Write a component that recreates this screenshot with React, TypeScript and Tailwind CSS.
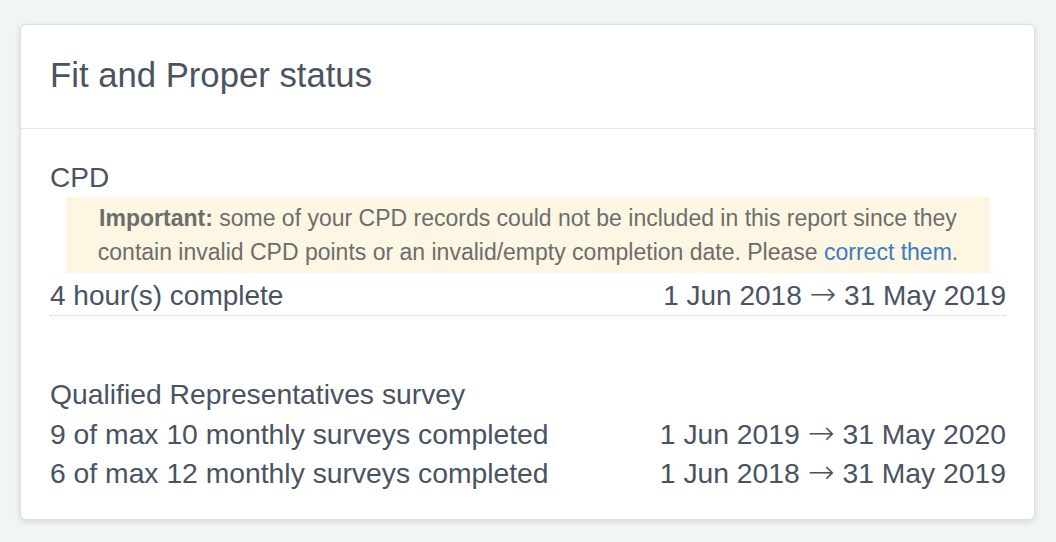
const rows = {
  cpd: [{ label: '4 hour(s) complete', from: '1 Jun 2018', to: '31 May 2019' }],
  survey: [
    { label: '9 of max 10 monthly surveys completed', from: '1 Jun 2019', to: '31 May 2020' },
    { label: '6 of max 12 monthly surveys completed', from: '1 Jun 2018', to: '31 May 2019' },
  ],
}

const Period = ({ from, to }: { from: string; to: string }) => (
  <span>
    {from} <span className="font-['DejaVu_Sans',sans-serif] text-[32px] font-extralight leading-none">→</span> {to}
  </span>
)

const App = () => {
  return (
    <div className="min-h-[542px] bg-[#f2f5f6] pt-[24px] pl-[20px] pr-[21px] font-['Liberation_Sans',Arial,sans-serif] text-[#4a5362]">
      <div className="rounded-[6px] border border-[#dcdfe2] bg-white shadow-[0_2px_6px_rgba(0,0,0,0.12)]">
        <div className="flex h-[104px] items-center border-b border-[#e3e5e8] px-[29px] pb-[2px]">
          <h1 className="text-[34.7px] leading-none">Fit and Proper status</h1>
        </div>

        <div className="pl-[29px] pr-[28px] pt-[30px] pb-[26px]">
          <h2 className="text-[28px] leading-[38px]">CPD</h2>
          <div className="mx-[16px] bg-[#fcf6e2] px-[20px] py-[4px] text-center text-[23px] leading-[34px] text-[#6d6d6d]">
            <strong className="font-bold">Important:</strong> some of your CPD records could not be included in this
            report since they contain invalid CPD points or an invalid/empty completion date. Please{' '}
            <a href="#" className="text-[#3a7cc3]">
              correct them
            </a>
            .
          </div>
          {rows.cpd.map((row) => (
            <div
              key={row.label}
              className="flex justify-between border-b border-dotted border-[#c9cdd2] pt-[4px] pb-[1px] text-[28px] leading-[37px]"
            >
              <span>{row.label}</span>
              <Period from={row.from} to={row.to} />
            </div>
          ))}

          <h2 className="mt-[59px] text-[28.3px] leading-[38px]">Qualified Representatives survey</h2>
          <div className="pt-[2px]">
            {rows.survey.map((row) => (
              <div key={row.label} className="flex justify-between text-[28.3px] leading-[39px]">
                <span>{row.label}</span>
                <Period from={row.from} to={row.to} />
              </div>
            ))}
          </div>
        </div>
      </div>
    </div>
  )
}

export default App
